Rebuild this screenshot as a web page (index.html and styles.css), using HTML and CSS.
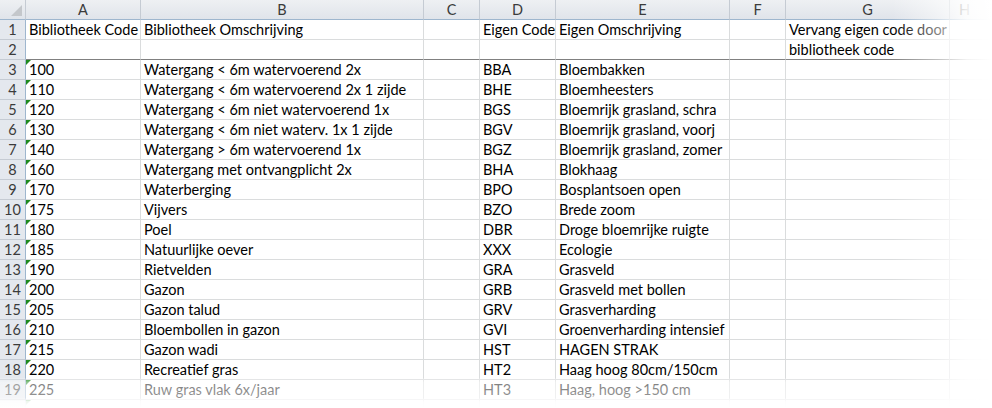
FILE: index.html
```html
<!DOCTYPE html>
<html>
<head>
<meta charset="utf-8">
<link rel="stylesheet" href="styles.css">
</head>
<body>
<div class="sheet">
  <div class="row head">
    <div class="c rh corner"><span class="tri"></span></div>
    <div class="c">A</div><div class="c">B</div><div class="c">C</div><div class="c">D</div><div class="c">E</div><div class="c">F</div><div class="c">G</div><div class="c colh">H</div>
  </div>
  <div class="row"><div class="c rh">1</div><div class="c">Bibliotheek Code</div><div class="c">Bibliotheek Omschrijving</div><div class="c"></div><div class="c">Eigen Code</div><div class="c">Eigen Omschrijving</div><div class="c"></div><div class="c">Vervang eigen code door</div><div class="c"></div></div>
  <div class="row sep"><div class="c rh">2</div><div class="c"></div><div class="c"></div><div class="c"></div><div class="c"></div><div class="c"></div><div class="c"></div><div class="c">bibliotheek code</div><div class="c"></div></div>
  <div class="row"><div class="c rh">3</div><div class="c txt">100</div><div class="c">Watergang &lt; 6m watervoerend 2x</div><div class="c"></div><div class="c">BBA</div><div class="c">Bloembakken</div><div class="c"></div><div class="c"></div><div class="c"></div></div>
  <div class="row"><div class="c rh">4</div><div class="c txt">110</div><div class="c">Watergang &lt; 6m watervoerend 2x 1 zijde</div><div class="c"></div><div class="c">BHE</div><div class="c">Bloemheesters</div><div class="c"></div><div class="c"></div><div class="c"></div></div>
  <div class="row"><div class="c rh">5</div><div class="c txt">120</div><div class="c">Watergang &lt; 6m niet watervoerend 1x</div><div class="c"></div><div class="c">BGS</div><div class="c">Bloemrijk grasland, schra</div><div class="c"></div><div class="c"></div><div class="c"></div></div>
  <div class="row"><div class="c rh">6</div><div class="c txt">130</div><div class="c">Watergang &lt; 6m niet waterv. 1x 1 zijde</div><div class="c"></div><div class="c">BGV</div><div class="c">Bloemrijk grasland, voorj</div><div class="c"></div><div class="c"></div><div class="c"></div></div>
  <div class="row"><div class="c rh">7</div><div class="c txt">140</div><div class="c">Watergang &gt; 6m watervoerend 1x</div><div class="c"></div><div class="c">BGZ</div><div class="c">Bloemrijk grasland, zomer</div><div class="c"></div><div class="c"></div><div class="c"></div></div>
  <div class="row"><div class="c rh">8</div><div class="c txt">160</div><div class="c">Watergang met ontvangplicht 2x</div><div class="c"></div><div class="c">BHA</div><div class="c">Blokhaag</div><div class="c"></div><div class="c"></div><div class="c"></div></div>
  <div class="row"><div class="c rh">9</div><div class="c txt">170</div><div class="c">Waterberging</div><div class="c"></div><div class="c">BPO</div><div class="c">Bosplantsoen open</div><div class="c"></div><div class="c"></div><div class="c"></div></div>
  <div class="row"><div class="c rh">10</div><div class="c txt">175</div><div class="c">Vijvers</div><div class="c"></div><div class="c">BZO</div><div class="c">Brede zoom</div><div class="c"></div><div class="c"></div><div class="c"></div></div>
  <div class="row"><div class="c rh">11</div><div class="c txt">180</div><div class="c">Poel</div><div class="c"></div><div class="c">DBR</div><div class="c">Droge bloemrijke ruigte</div><div class="c"></div><div class="c"></div><div class="c"></div></div>
  <div class="row"><div class="c rh">12</div><div class="c txt">185</div><div class="c">Natuurlijke oever</div><div class="c"></div><div class="c">XXX</div><div class="c">Ecologie</div><div class="c"></div><div class="c"></div><div class="c"></div></div>
  <div class="row"><div class="c rh">13</div><div class="c txt">190</div><div class="c">Rietvelden</div><div class="c"></div><div class="c">GRA</div><div class="c">Grasveld</div><div class="c"></div><div class="c"></div><div class="c"></div></div>
  <div class="row"><div class="c rh">14</div><div class="c txt">200</div><div class="c">Gazon</div><div class="c"></div><div class="c">GRB</div><div class="c">Grasveld met bollen</div><div class="c"></div><div class="c"></div><div class="c"></div></div>
  <div class="row"><div class="c rh">15</div><div class="c txt">205</div><div class="c">Gazon talud</div><div class="c"></div><div class="c">GRV</div><div class="c">Grasverharding</div><div class="c"></div><div class="c"></div><div class="c"></div></div>
  <div class="row"><div class="c rh">16</div><div class="c txt">210</div><div class="c">Bloembollen in gazon</div><div class="c"></div><div class="c">GVI</div><div class="c">Groenverharding intensief</div><div class="c"></div><div class="c"></div><div class="c"></div></div>
  <div class="row"><div class="c rh">17</div><div class="c txt">215</div><div class="c">Gazon wadi</div><div class="c"></div><div class="c">HST</div><div class="c">HAGEN STRAK</div><div class="c"></div><div class="c"></div><div class="c"></div></div>
  <div class="row"><div class="c rh">18</div><div class="c txt">220</div><div class="c">Recreatief gras</div><div class="c"></div><div class="c">HT2</div><div class="c">Haag hoog 80cm/150cm</div><div class="c"></div><div class="c"></div><div class="c"></div></div>
  <div class="row"><div class="c rh">19</div><div class="c txt">225</div><div class="c">Ruw gras vlak 6x/jaar</div><div class="c"></div><div class="c">HT3</div><div class="c">Haag, hoog &gt;150 cm</div><div class="c"></div><div class="c"></div><div class="c"></div></div>
  <div class="row"><div class="c rh"></div><div class="c txt"></div><div class="c"></div><div class="c"></div><div class="c"></div><div class="c"></div><div class="c"></div><div class="c"></div><div class="c"></div></div>
  <div class="fade-right"></div>
  <div class="fade-bottom"></div>
</div>
</body>
</html>
```

FILE: styles.css
```css
html, body {
  margin: 0;
  padding: 0;
  background: #ffffff;
}
body {
  width: 992px;
  height: 408px;
  overflow: hidden;
  font-family: Lato, "Liberation Sans", sans-serif;
  font-size: 14.5px;
  color: #000;
}
.sheet {
  position: relative;
  width: 992px;
  height: 408px;
  overflow: hidden;
}
.row {
  display: grid;
  grid-template-columns: 26px 115px 283px 56px 76px 174px 56px 164px 42px;
  height: 20px;
}
.c {
  box-sizing: border-box;
  border-right: 1px solid #dadcdd;
  border-bottom: 1px solid #dadcdd;
  padding: 0 0 0 3px;
  line-height: 19px;
  white-space: nowrap;
  overflow: visible;
  position: relative;
}
.c.rh {
  background: #e4e8ee;
  border-right-color: #9eb6ce;
  border-bottom-color: #c5cbd3;
  color: #3b3b3b;
  text-align: center;
  padding: 0;
}
.head .c {
  background: linear-gradient(#eef0f3, #e0e4ea);
  border-right-color: #c5cbd3;
  border-bottom-color: #9eb6ce;
  color: #3b3b3b;
  text-align: center;
  padding: 0;
}
.head .c.colh {
  text-align: left;
  padding-left: 9px;
}
.tri {
  position: absolute;
  right: 3px;
  bottom: 3px;
  width: 0;
  height: 0;
  border-left: 11px solid transparent;
  border-bottom: 11px solid #c4c7cb;
}
.sep .c:not(.rh) {
  border-bottom-color: #808080;
}
.txt::before {
  content: "";
  position: absolute;
  left: 0;
  top: 0;
  width: 0;
  height: 0;
  border-top: 5px solid #1e8a1e;
  border-right: 5px solid transparent;
}
.fade-right {
  position: absolute;
  top: 0;
  right: 0;
  width: 100px;
  height: 408px;
  background: linear-gradient(to right, rgba(255,255,255,0) 0%, rgba(255,255,255,0.5) 45%, rgba(255,255,255,0.9) 75%, #fff 100%);
}
.fade-bottom {
  position: absolute;
  left: 0;
  bottom: 0;
  width: 992px;
  height: 30px;
  background: linear-gradient(to bottom, rgba(255,255,255,0.15) 0%, rgba(255,255,255,0.5) 15%, rgba(255,255,255,0.58) 65%, rgba(255,255,255,0.92) 78%, #fff 100%);
}
```
